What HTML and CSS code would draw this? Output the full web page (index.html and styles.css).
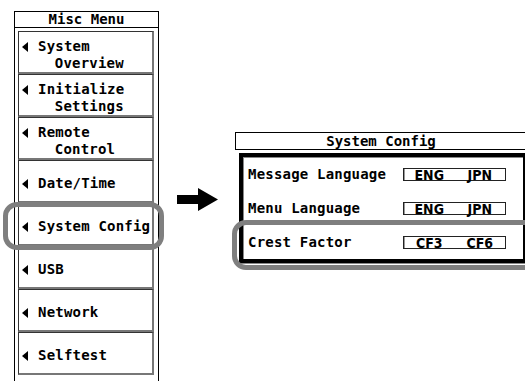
FILE: index.html
```html
<!DOCTYPE html>
<html lang="en">
<head>
  <meta charset="UTF-8">
  <title>Misc Menu - System Config</title>
  <link rel="stylesheet" href="styles.css">
</head>
<body>
  <div class="page">
    <div class="menu">
      <div class="menu-title">Misc Menu</div>
      <div class="menu-list">
        <div class="btn"><span class="lbl"><span class="tri"></span>System<span class="sub">Overview</span></span></div>
        <div class="btn"><span class="lbl"><span class="tri"></span>Initialize<span class="sub">Settings</span></span></div>
        <div class="btn"><span class="lbl"><span class="tri"></span>Remote<span class="sub">Control</span></span></div>
        <div class="btn"><span class="lbl"><span class="tri"></span>Date/Time</span></div>
        <div class="btn"><span class="lbl"><span class="tri"></span>System Config</span></div>
        <div class="btn"><span class="lbl"><span class="tri"></span>USB</span></div>
        <div class="btn"><span class="lbl"><span class="tri"></span>Network</span></div>
        <div class="btn"><span class="lbl"><span class="tri"></span>Selftest</span></div>
      </div>
    </div>

    <svg class="arrow" width="42" height="24" viewBox="0 0 42 24">
      <polygon points="0,7 21,7 21,0 41,11.5 21,23 21,16 0,16" fill="#000"/>
    </svg>

    <div class="panel">
      <div class="panel-title">System Config</div>
      <div class="frame">
        <div class="row">
          <span class="row-label">Message Language</span>
          <div class="opts"><span>ENG</span><span>JPN</span></div>
        </div>
        <div class="row">
          <span class="row-label">Menu Language</span>
          <div class="opts"><span>ENG</span><span>JPN</span></div>
        </div>
        <div class="row">
          <span class="row-label">Crest Factor</span>
          <div class="opts"><span>CF3</span><span>CF6</span></div>
        </div>
      </div>
    </div>

    <!-- callout rings -->
    <div class="ring ring-menu"></div>
    <div class="ring ring-row"></div>
  </div>
</body>
</html>
```

FILE: styles.css
```css
html, body {
  margin: 0;
  padding: 0;
  background: #fff;
  overflow: hidden;
}
body {
  width: 525px;
  height: 381px;
  font-family: "DejaVu Sans Mono", "Liberation Mono", monospace;
  font-weight: bold;
  font-size: 14px;
  color: #000;
}
.page {
  position: relative;
  display: flex;
  align-items: flex-start;
  padding: 11px 0 0 14px;
  height: 381px;
  box-sizing: border-box;
}

/* left menu */
.menu {
  width: 145px;
  height: 380px;
  flex: none;
  box-sizing: border-box;
  border: 1px solid #000;
  border-bottom: none;
}
.menu-title {
  height: 15px;
  line-height: 15px;
  text-align: center;
  border-bottom: 1px solid #000;
}
.menu-list {
  padding: 3px 4px 0 3px;
}
.btn {
  display: flex;
  align-items: center;
  height: 43px;
  box-sizing: border-box;
  border: 1px solid #333;
  border-right: 2px solid #777;
  border-bottom: 2px solid #777;
  padding: 5px 0 0 3px;
}
.lbl {
  line-height: 17px;
  white-space: nowrap;
  letter-spacing: 0.2px;
}
.tri {
  display: inline-block;
  width: 0;
  height: 0;
  border-top: 5px solid transparent;
  border-bottom: 5px solid transparent;
  border-right: 6px solid #000;
  margin-right: 10px;
  vertical-align: -1px;
}
.sub {
  display: block;
  padding-left: calc(16px + 2ch);
}

/* arrow */
.arrow {
  flex: none;
  margin: 177px 0 0 18px;
}

/* right panel */
.panel {
  width: 292px;
  flex: none;
  margin: 121px 0 0 16px;
}
.panel-title {
  height: 16px;
  line-height: 16px;
  text-align: center;
  border: 1px solid #000;
}
.frame {
  margin: 3px 2px 0 4px;
  border: 4px solid #000;
  border-right: 2px solid #000;
  box-shadow: 1px 1px 0 #888, inset 1px 1px 0 #888;
}
.row {
  display: flex;
  align-items: center;
  height: 34px;
  padding-left: 5px;
}
.row-label {
  width: 155px;
  flex: none;
  letter-spacing: 0.2px;
}
.opts {
  display: grid;
  grid-template-columns: 1fr 1fr;
  width: 103px;
  height: 13px;
  box-sizing: border-box;
  border: 1px solid #222;
  box-shadow: inset 1px 0 0 #999;
  font-family: "Liberation Sans Narrow", "DejaVu Sans Condensed", "Liberation Sans", sans-serif;
  font-size: 14px;
  line-height: 12px;
  text-align: center;
}

/* callout rings */
.ring {
  position: absolute;
  box-sizing: border-box;
  border: 5px solid #7f7f7f;
  border-radius: 14px;
}
.ring-menu {
  left: 3px;
  top: 202px;
  width: 161px;
  height: 48px;
}
.ring-row {
  left: 232px;
  top: 220px;
  width: 310px;
  height: 50px;
}
```
